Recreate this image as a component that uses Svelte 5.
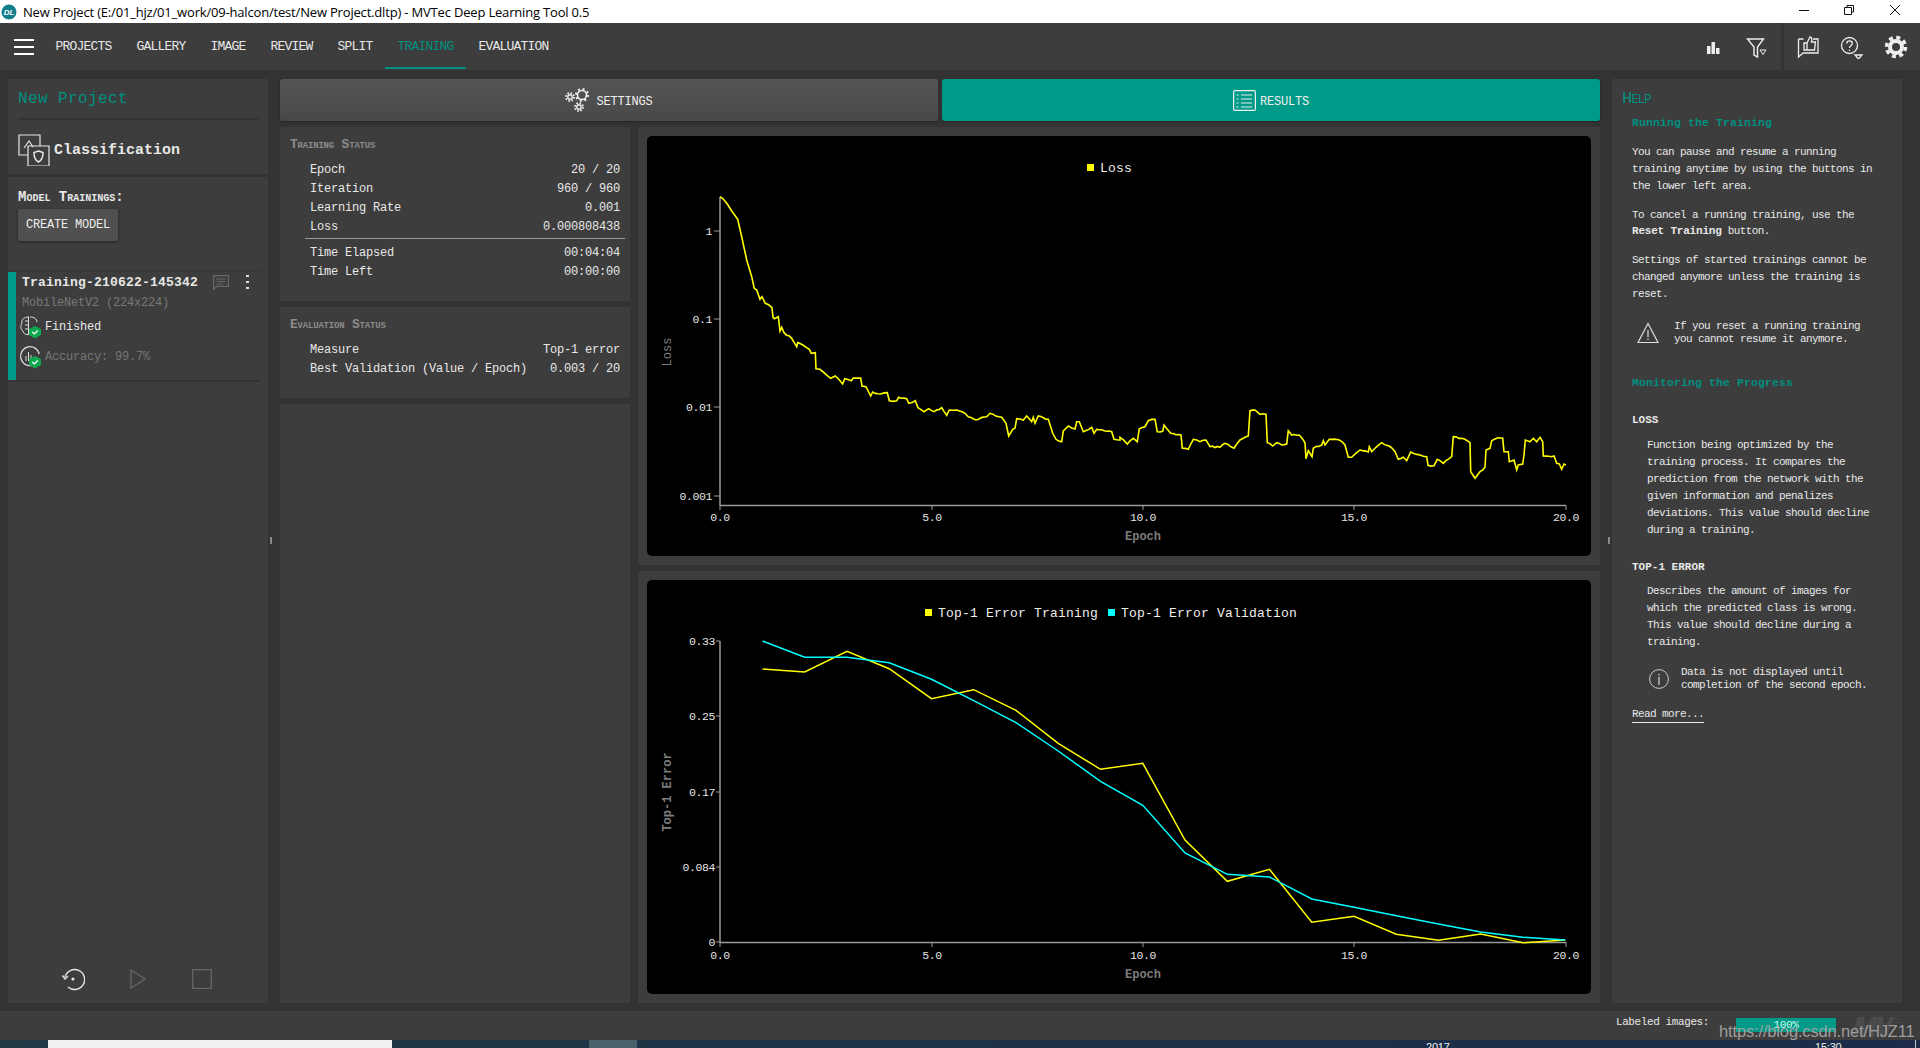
<script>
  const nav = ['PROJECTS', 'GALLERY', 'IMAGE', 'REVIEW', 'SPLIT', 'TRAINING', 'EVALUATION'];
  const trainRows = [['Epoch', '20 / 20'], ['Iteration', '960 / 960'], ['Learning Rate', '0.001'], ['Loss', '0.000808438']];
  const timeRows = [['Time Elapsed', '00:04:04'], ['Time Left', '00:00:00']];
  const evalRows = [['Measure', 'Top-1 error'], ['Best Validation (Value / Epoch)', '0.003 / 20']];

  const a1 = [240,200,250,207,262,222,275,243,293,268,305,320,320,390,335,440,343,475,350,480,360,508,366,500,376,520,396,533,399,562,403,566,415,560,420,603,425,592,432,608,455,625,470,650,473,638,490,646,508,658,514,670,526,668,528,716,540,718,552,728,572,745,586,738,608,762,614,746,634,752,640,744,662,744,666,768,678,770,692,798,698,786,722,792,742,788,748,812,770,812,776,802,800,806,806,820,826,812,834,833,852,845,866,836,882,845,905,833,920,856,928,840,950,840,975,850,985,860,1000,866,1008,870,1040,860,1050,850,1085,862,1098,880,1106,918,1118,898,1125,895,1130,866,1150,870,1160,858,1175,875,1180,862,1185,880,1195,858,1225,868,1238,910,1248,928,1265,935,1270,903,1285,888,1305,897,1310,875,1318,875,1330,905,1355,892,1362,910,1370,898,1415,905,1422,928,1440,930];
  const a2 = [60,412,82,432,100,415,112,425,118,386,135,380,145,362,165,358,172,395,188,394,192,375,212,400,243,405,247,445,265,448,280,418,300,425,318,420,330,440,360,442,375,430,402,445,420,420,445,408,450,332,465,330,480,343,498,343,502,428,518,438,530,428,545,435,560,432,565,392,575,405,598,405,615,428,618,476,625,452,636,470,640,445,665,435,670,422,675,435,688,418,718,420,735,435,745,472,755,472,770,458,780,450,805,456,808,440,815,455,828,442,845,428,868,438,885,455,895,478,910,472,920,482,932,456,960,465,980,470,984,496,1002,497,1012,478,1030,490,1055,470,1060,410,1085,415,1110,428,1112,515,1125,535,1140,515,1155,502,1158,450,1170,445,1175,422,1195,413,1208,415,1212,455,1225,455,1228,485,1242,480,1250,510,1255,495,1268,492,1272,465,1276,420,1290,425,1300,415,1310,425,1320,412,1328,425,1330,468,1362,468,1370,490,1378,492,1385,508,1392,492,1398,495];

  const raw = [];
  for (let i = 0; i < a1.length; i += 2) raw.push([640 + a1[i] / 3, 130 + a1[i + 1] / 3]);
  for (let i = 0; i < a2.length; i += 2) raw.push([1100 + a2[i] / 3, 300 + a2[i + 1] / 3]);

  function jitter(n) {
    const s = Math.sin(n * 12.9898) * 43758.5453;
    return (s - Math.floor(s) - 0.5) * 1.5;
  }
  function noisy(points) {
    const out = [];
    let c = 0;
    for (let i = 0; i < points.length - 1; i++) {
      const [x0, y0] = points[i];
      const [x1, y1] = points[i + 1];
      out.push([x0, y0]);
      const dx = x1 - x0;
      const n = x0 > 760 ? Math.floor(dx / 2.5) : 0;
      for (let k = 1; k < n; k++) {
        const t = k / n;
        out.push([x0 + dx * t, y0 + (y1 - y0) * t + jitter(c++)]);
      }
    }
    out.push(points[points.length - 1]);
    return out.map((p) => p[0].toFixed(1) + ',' + p[1].toFixed(1)).join(' ');
  }
  const lossLine = noisy(raw);

  const zy = [267,276,214,266,356,329,391,490,568,550,780,904,868,1027,1009,1063,1081,1062,1088,1080];
  const zc = [183,232,232,248,298,362,428,513,604,676,819,883,891,957,982,1007,1032,1056,1072,1080];
  const toLine = (arr) => arr.map((v, i) => (640 + (200 + 69 * i) / 1.633).toFixed(1) + ',' + (580 + v / 3).toFixed(1)).join(' ');
  const topY = toLine(zy);
  const topC = toLine(zc);

  const xTicks = [[720, '0.0'], [932, '5.0'], [1143, '10.0'], [1354, '15.0'], [1566, '20.0']];
  const yLoss = [[231, '1'], [319, '0.1'], [407, '0.01'], [496, '0.001']];
  const yErr = [[641, '0.33'], [716, '0.25'], [792, '0.17'], [867, '0.084'], [942, '0']];
</script>

<div class="app">
  <header class="title">
    <svg class="dl" viewBox="0 0 16 16" width="16" height="16">
      <circle cx="8" cy="8" r="7.5" fill="#12808c" />
      <text x="8" y="11" text-anchor="middle" class="dltext">DL</text>
    </svg>
    <span class="wintitle">New Project (E:/01_hjz/01_work/09-halcon/test/New Project.dltp) - MVTec Deep Learning Tool 0.5</span>
    <div class="winctl">
      <svg width="121" height="23" viewBox="1799 0 121 23" fill="none" stroke="#111" stroke-width="1">
        <path d="M1799 10.5h10" />
        <path d="M1844.5 7.5h7v7h-7z M1847 7V5.5h6.5v6.5H1852" />
        <path d="M1890 5l10 10M1900 5l-10 10" />
      </svg>
    </div>
  </header>

  <nav class="nav">
    <div class="burger"><i></i><i></i><i></i></div>
    <div class="navitems">
      {#each nav as n}
        <span class="navitem" class:active={n === 'TRAINING'}>{n}</span>
      {/each}
    </div>
    <div class="navright">
      <svg class="ic1" width="60" height="24" viewBox="1707 34 60 24" fill="none" stroke="#eee">
        <path d="M1707 45h3.5v8H1707zM1711.5 41h3.5v12h-3.5zM1716 47h3.5v6H1716z" fill="#eee" stroke="none" />
        <path d="M1747.5 38h16l-6 8v10l-3.5-2v-8z" stroke-width="1.4" />
        <path d="M1760 49h6l-3 4.5z" stroke-width="1" />
      </svg>
      <div class="navsep"></div>
      <svg class="ic2" width="112" height="24" viewBox="1796 34 112 24" fill="none" stroke="#eee" stroke-width="1.3">
        <path d="M1798.5 38h5M1813 38h5v14h-15l-4.500 4V38" />
        <path d="M1804 42h3v7h-3zM1807 42l3-6c2 0 2 2 1.500 5h4l-1 8h-7" />
        <circle cx="1849.500" cy="44.500" r="8" />
        <path d="M1846.800 42.500c0-3.500 5.500-3.500 5.500 0 0 2-2.800 2-2.800 4.500M1849.500 48.800v1.200" />
        <path d="M1855 54h7l-3.500 4z" />
        <circle cx="1896" cy="46" r="6" stroke-width="4" />
        <circle cx="1896" cy="46" r="9.500" stroke-width="3.500" stroke-dasharray="4 3.460" />
      </svg>
    </div>
  </nav>

  <main class="main">
    <aside class="left">
      <section class="panel p-project">
        <h1 class="project">New Project</h1>
        <div class="rule"></div>
        <div class="kind">
          <svg width="32" height="32" viewBox="0 0 32 32" fill="none" stroke="#e8e8e8" stroke-width="1.200">
            <path d="M1 1h21v20H1z M1 1h8" />
            <path d="M10 12h21v20H10z" fill="#3d3d3d" />
            <path d="M6 14l5-7 4 6" />
            <path d="M20.500 17l4.500 1.500c0 5-1.500 8-4.500 9.500-3-1.500-4.500-4.500-4.500-9.500z" stroke-width="1.500" />
          </svg>
          <span>Classification</span>
        </div>
      </section>
      <section class="panel p-train">
        <div class="mt">Model Trainings:</div>
        <button class="create">CREATE MODEL</button>
        <div class="thin"></div>
        <div class="item">
          <div class="tname">
            <b>Training-210622-145342</b>
            <svg width="16" height="15" viewBox="0 0 16 15" fill="none" stroke="#6a6a6a" stroke-width="1.200">
              <path d="M.6.600h14.800v10.800H4L.6 14.400zM3.500 4h9M3.500 6.500h9M3.500 9h6" />
            </svg>
            <span class="dots"><i></i><i></i><i></i></span>
          </div>
          <div class="arch">MobileNetV2 (224x224)</div>
          <div class="stat s1">
            <svg width="24" height="24" viewBox="0 0 24 24" fill="none" stroke="#ddd" stroke-width="1">
              <path d="M9.500 2C5 2 2 5 3 8c-2 3-1 7 1 8 0 2 2 4 5.500 3.500zM9.500 1.500v18M11 2c4 0 7 2 7 5M6 6h3M6 10h3M6 14h3" />
              <path d="M16 11l6 3v6l-6 3.500-6-3.500v-6z" fill="#10a84e" stroke="none" />
              <path d="M13.300 17l2 2 3.500-3.500" stroke="#fff" stroke-width="1.200" />
            </svg>
            <span>Finished</span>
          </div>
          <div class="stat s2">
            <svg width="24" height="24" viewBox="0 0 24 24" fill="none" stroke="#ddd" stroke-width="1">
              <path d="M13 20.500A9.500 9.500 0 1 1 20.300 9" stroke-width="1.300" />
              <path d="M7 11v5M9.500 7v9M12 10v6" />
              <path d="M16 11l6 3v6l-6 3.500-6-3.500v-6z" fill="#10a84e" stroke="none" />
              <path d="M13.300 17l2 2 3.500-3.500" stroke="#fff" stroke-width="1.200" />
            </svg>
            <span>Accuracy: 99.7%</span>
          </div>
        </div>
        <div class="thin2"></div>
        <div class="spring"></div>
        <div class="controls">
          <svg width="24" height="24" viewBox="0 0 24 24" fill="none" stroke="#e6e6e6" stroke-width="1.400">
            <path d="M4 10A10 10 0 1 1 7 20" />
            <path d="M1.500 8.500L4 12l3-3" />
            <circle cx="12" cy="12" r="1.600" fill="#e6e6e6" stroke="none" />
          </svg>
          <svg width="16" height="20" viewBox="0 0 16 20" fill="none" stroke="#666" stroke-width="1.300"><path d="M1 1l14 9-14 9z" /></svg>
          <svg width="20" height="20" viewBox="0 0 20 20" fill="none" stroke="#666" stroke-width="1.300"><path d="M.7.700h18.600v18.600H.7z" /></svg>
        </div>
      </section>
    </aside>
    <span class="grip g1"></span>

    <div class="center">
      <div class="tabs">
        <button class="tab">
          <svg width="26" height="26" viewBox="0 0 26 26" fill="none" stroke="#eee">
            <circle cx="17" cy="8" r="4.500" stroke-width="1.600" />
            <circle cx="17" cy="8" r="6" stroke-width="2" stroke-dasharray="2 2.700" />
            <circle cx="5" cy="10" r="2.200" stroke-width="1.400" />
            <circle cx="5" cy="10" r="4" stroke-width="1.800" stroke-dasharray="1.600 1.540" />
            <circle cx="14" cy="20" r="2.200" stroke-width="1.400" />
            <circle cx="14" cy="20" r="4" stroke-width="1.800" stroke-dasharray="1.600 1.540" />
          </svg>
          <span>SETTINGS</span>
        </button>
        <button class="tab on">
          <svg width="23" height="21" viewBox="0 0 23 21" fill="none" stroke="#eee" stroke-width="1.200">
            <rect x=".6" y=".6" width="21.800" height="19.800" rx="1.500" />
            <path d="M3.500 5h2M3.500 9h2M3.500 13h2M3.500 17h2M8 5h11M8 9h11M8 13h11M8 17h11" />
          </svg>
          <span>RESULTS</span>
        </button>
      </div>
      <div class="lower">
        <div class="status">
          <section class="panel st st1">
            <h2>Training Status</h2>
            {#each trainRows as r}
              <div class="row"><span>{r[0]}</span><span>{r[1]}</span></div>
            {/each}
            <div class="hr"></div>
            {#each timeRows as r}
              <div class="row"><span>{r[0]}</span><span>{r[1]}</span></div>
            {/each}
          </section>
          <section class="panel st st2">
            <h2>Evaluation Status</h2>
            {#each evalRows as r}
              <div class="row"><span>{r[0]}</span><span>{r[1]}</span></div>
            {/each}
          </section>
          <section class="panel st3"></section>
        </div>
        <div class="charts">
          <section class="panel cp c1">
            <div class="black">
              <svg viewBox="647 136 944 420" width="944" height="420">
                <rect x="1087" y="164" width="7" height="7" fill="#ff0" />
                <text x="1100" y="172" class="lg">Loss</text>
                <path d="M720 197V505.500M720 505.500H1566" class="axis" />
                {#each yLoss as t}
                  <path d="M714 {t[0]}h6" class="tick" />
                  <text x="712" y={t[0] + 4} text-anchor="end" class="tl">{t[1]}</text>
                {/each}
                {#each xTicks as t}
                  <path d="M{t[0]} 505v5" class="tick" />
                  <text x={t[0]} y="521" text-anchor="middle" class="tl">{t[1]}</text>
                {/each}
                <polyline points={lossLine} fill="none" stroke="#ff0" stroke-width="1.600" />
                <text transform="translate(671 352) rotate(-90)" text-anchor="middle" class="al">Loss</text>
                <text x="1143" y="540" text-anchor="middle" class="al b">Epoch</text>
              </svg>
            </div>
          </section>
          <section class="panel cp c2">
            <div class="black">
              <svg viewBox="647 580 944 414" width="944" height="414">
                <rect x="925" y="609" width="7" height="7" fill="#ff0" />
                <text x="938" y="617" class="lg">Top-1 Error Training</text>
                <rect x="1108" y="609" width="7" height="7" fill="#0ff" />
                <text x="1121" y="617" class="lg">Top-1 Error Validation</text>
                <path d="M720 641V942.500M720 942.500H1566" class="axis" />
                {#each yErr as t}
                  <path d="M716 {t[0]}h4" class="tick" />
                  <text x="715" y={t[0] + 4} text-anchor="end" class="tl">{t[1]}</text>
                {/each}
                {#each xTicks as t}
                  <path d="M{t[0]} 942v5" class="tick" />
                  <text x={t[0]} y="959" text-anchor="middle" class="tl">{t[1]}</text>
                {/each}
                <polyline points={topY} fill="none" stroke="#ff0" stroke-width="1.500" />
                <polyline points={topC} fill="none" stroke="#0ff" stroke-width="1.500" />
                <text transform="translate(671 792) rotate(-90)" text-anchor="middle" class="al b">Top-1 Error</text>
                <text x="1143" y="978" text-anchor="middle" class="al b">Epoch</text>
              </svg>
            </div>
          </section>
        </div>
      </div>
    </div>
    <span class="grip g2"></span>

    <aside class="panel help">
      <h3>Help</h3>
      <h4>Running the Training</h4>
      <p>You can pause and resume a running<br />training anytime by using the buttons in<br />the lower left area.</p>
      <p class="tight">To cancel a running training, use the<br /><b>Reset Training</b> button.</p>
      <p class="third">Settings of started trainings cannot be<br />changed anymore unless the training is<br />reset.</p>
      <div class="note warn">
        <svg width="22" height="22" viewBox="0 0 22 22" fill="none" stroke="#ddd" stroke-width="1.200">
          <path d="M11 1.500L21 20.500H1zM11 8v7M11 16.500v1.500" />
        </svg>
        <span>If you reset a running training<br />you cannot resume it anymore.</span>
      </div>
      <h4 class="mon">Monitoring the Progress</h4>
      <h5 class="l">LOSS</h5>
      <p class="ind">Function being optimized by the<br />training process. It compares the<br />prediction from the network with the<br />given information and penalizes<br />deviations. This value should decline<br />during a training.</p>
      <h5 class="t">TOP-1 ERROR</h5>
      <p class="ind ind2">Describes the amount of images for<br />which the predicted class is wrong.<br />This value should decline during a<br />training.</p>
      <div class="note info">
        <svg width="20" height="20" viewBox="0 0 20 20" fill="none" stroke="#ccc" stroke-width="1">
          <circle cx="10" cy="10" r="9.400" />
          <path d="M10 8v8M10 5v1.500" stroke-width="1.300" />
        </svg>
        <span>Data is not displayed until<br />completion of the second epoch.</span>
      </div>
      <a class="more" href="#more">Read more...</a>
    </aside>
  </main>

  <footer class="statusbar">
    <span class="lab">Labeled images:</span>
    <span class="bar">100%</span>
    <svg class="mv" width="54" height="22" viewBox="0 0 54 22" fill="#4c4c4c">
      <path d="M0 22L7 2h6l1 12L21 2h6l-4 20h-5l1-10-6 10H9l-1-11-4 11z" />
      <path d="M26 2h6l1 13 6-13h5l-9 20h-6z" />
      <text x="44" y="8" class="ec">EC</text>
    </svg>
  </footer>
  <span class="wm">https://blog.csdn.net/HJZ11</span>

  <div class="task">
    <i class="white"></i>
    <i class="sel"></i>
    <span class="d">2017</span>
    <span class="tm">15:30</span>
    <i class="edge"></i>
  </div>
</div>

<style>
  :global(body) { margin: 0; background: #333; }
  .app {
    position: relative;
    width: 1920px;
    height: 1048px;
    display: flex;
    flex-direction: column;
    overflow: hidden;
    font-family: "Liberation Mono", "DejaVu Sans Mono", monospace;
    font-size: 12px;
    letter-spacing: -0.2px;
    color: #e8e8e8;
    background: #333;
  }
  .title {
    height: 23px;
    background: #fff;
    display: flex;
    align-items: center;
    padding-left: 1px;
    color: #000;
    flex: none;
  }
  .dltext { font: italic bold 8px "Liberation Sans", sans-serif; fill: #fff; }
  .wintitle {
    font-family: "Open Sans", sans-serif;
    font-size: 13px;
    letter-spacing: -0.18px;
    margin-left: 6px;
  }
  .winctl { margin-left: auto; height: 23px; }
  .nav {
    height: 47px;
    flex: none;
    background: #3d3d3d;
    display: flex;
    align-items: stretch;
    padding-left: 14px;
  }
  .burger {
    width: 20px;
    display: flex;
    flex-direction: column;
    justify-content: center;
    gap: 5px;
  }
  .burger i { height: 2px; background: #fff; display: block; }
  .navitems { display: flex; margin-left: 9px; }
  .navitem {
    padding: 0 12.5px;
    font-size: 13px;
    letter-spacing: -0.8px;
    line-height: 48px;
    height: 44px;
  }
  .navitem.active { color: #00907f; border-bottom: 2px solid #00907f; }
  .navright { margin-left: auto; display: flex; align-items: center; position: relative; height: 47px; }
  .navsep { width: 3px; height: 47px; background: #333; margin-left: 14px; margin-right: 12px; }
  .ic2 { margin-right: 12px; }

  .main {
    flex: none;
    height: 941px;
    display: flex;
    padding: 9px 18px 8px 8px;
    box-sizing: border-box;
    position: relative;
  }
  .panel { background: #3d3d3d; }
  .left { width: 260px; display: flex; flex-direction: column; gap: 3px; flex: none; }
  .p-project { height: 95px; padding: 0 10px; box-sizing: border-box; }
  .project {
    margin: 0;
    padding-top: 10px;
    box-sizing: border-box;
    font-size: 16px;
    letter-spacing: 0.4px;
    font-weight: normal;
    line-height: 20px;
    height: 39px;
    color: #009080;
  }
  .rule { height: 2px; background: #333; }
  .kind { display: flex; align-items: center; margin-top: 14px; gap: 4px; font-size: 15px; letter-spacing: 0; font-weight: bold; }
  .p-train { flex: 1; display: flex; flex-direction: column; }
  .mt {
    margin: 12px 0 0 10px;
    font-variant: small-caps;
    font-weight: bold;
    font-size: 14px;
    letter-spacing: 0;
    line-height: 16px;
  }
  .create {
    margin: 4px 0 0 10px;
    width: 100px;
    height: 32px;
    background: #505050;
    border: 0;
    border-radius: 2px;
    box-shadow: 0 1px 3px rgba(0,0,0,.45);
    color: #eee;
    font: 12px "Liberation Mono", monospace;
    letter-spacing: -0.2px;
    padding: 0;
  }
  .thin { height: 2px; background: #383838; margin-top: 29px; width: 252px; }
  .item {
    height: 108px;
    border-left: 8px solid #009a88;
    box-sizing: border-box;
    padding-left: 6px;
    width: 252px;
  }
  .tname { display: flex; align-items: center; height: 20px; padding-bottom: 2px; }
  .tname b { font-size: 13px; letter-spacing: 0.2px; width: 191px; }
  .dots { display: flex; flex-direction: column; gap: 3.5px; margin-left: 17px; }
  .dots i { width: 2.500px; height: 2.500px; background: #ddd; display: block; }
  .arch { color: #787878; line-height: 18px; }
  .stat { display: flex; align-items: center; gap: 2px; margin-left: -3px; height: 24px; }
  .s1 { margin-top: 3px; }
  .s2 { margin-top: 6px; color: #757575; }
  .thin2 { height: 2px; background: #333; width: 252px; }
  .spring { flex: 1; }
  .controls { display: flex; align-items: center; height: 24px; margin: 0 0 12px 53px; gap: 0; }
  .controls svg:nth-child(2) { margin-left: 45px; }
  .controls svg:nth-child(3) { margin-left: 46px; }

  .grip { position: absolute; width: 2px; height: 7px; background: #888; top: 467px; }
  .g1 { left: 270px; }
  .g2 { left: 1608px; }

  .center { margin-left: 12px; width: 1320px; flex: none; display: flex; flex-direction: column; }
  .tabs { display: flex; gap: 4px; height: 42px; flex: none; }
  .tab {
    flex: 1;
    border: 0;
    border-radius: 3px;
    background: linear-gradient(#555, #484848);
    color: #eee;
    display: flex;
    align-items: center;
    justify-content: center;
    gap: 5px;
    font: 12px "Liberation Mono", monospace;
    letter-spacing: -0.2px;
    padding: 0;
    box-shadow: 0 1px 2px rgba(0,0,0,.3);
  }
  .tab span { padding-top: 4px; }
  .tab.on { background: #009a88; gap: 4px; }
  .lower { flex: 1; margin-top: 6px; display: flex; gap: 8px; min-height: 0; }
  .status { width: 350px; flex: none; display: flex; flex-direction: column; gap: 6px; }
  .st { box-sizing: border-box; padding: 0 10px 0 11px; }
  .st1 { height: 174px; }
  .st2 { height: 91px; }
  .st3 { flex: 1; }
  .st h2 {
    margin: 0 0 0 -1px;
    padding-top: 10px;
    font-size: 13px;
    font-variant: small-caps;
    letter-spacing: -0.2px;
    font-weight: bold;
    color: #8b8b8b;
    line-height: 16px;
    height: 34px;
    box-sizing: border-box;
  }
  .row {
    display: flex;
    justify-content: space-between;
    height: 19px;
    line-height: 19px;
    padding-left: 19px;
    white-space: pre;
  }
  .hr { height: 1px; background: #9a9a9a; margin: 1px -5px 5px 14px; }
  .charts { flex: 1; display: flex; flex-direction: column; gap: 6px; }
  .cp { padding: 9px; box-sizing: border-box; }
  .c1 { height: 438px; }
  .c2 { flex: 1; }
  .black { background: #000; border-radius: 5px; height: 100%; overflow: hidden; }
  .black svg { display: block; }
  .axis { fill: none; stroke: #9a9a9a; stroke-width: 1.500; }
  .tick { fill: none; stroke: #9a9a9a; stroke-width: 1; }
  .tl { font: 11.500px "Liberation Mono", monospace; letter-spacing: -0.4px; fill: #e4e4e4; }
  .lg { font: 13px "Liberation Mono", monospace; letter-spacing: 0.2px; fill: #eee; }
  .al { font: 12px "Liberation Mono", monospace; letter-spacing: 0; fill: #7d7d7d; }
  .al.b { font-weight: bold; }

  .help {
    margin-left: 12px;
    width: 290px;
    flex: none;
    box-sizing: border-box;
    padding: 10px 0 0 20px;
    font-size: 11px;
    letter-spacing: -0.6px;
    line-height: 17px;
  }
  .help h3 {
    margin: 0 0 0 -10px;
    font-variant: small-caps;
    font-size: 17px;
    letter-spacing: -0.8px;
    line-height: 20px;
    font-weight: normal;
    color: #009080;
  }
  .help h4 {
    margin: 5px 0 0;
    font-size: 11.500px;
    letter-spacing: 0.1px;
    line-height: 18px;
    font-weight: bold;
    color: #009080;
  }
  .help p { margin: 12px 0 0; }
  .help p.third { margin-top: 13px; }
  .help h4 + p { margin-top: 12px; }
  .help b { font-weight: bold; letter-spacing: -0.2px; }
  .help .tight { line-height: 16px; }
  .note { display: flex; line-height: 13px; align-items: center; }
  .warn { margin: 17px 0 0 5px; gap: 15px; }
  .help h4.mon { margin-top: 28px; }
  .help h5 {
    margin: 0;
    font-size: 11px;
    letter-spacing: 0;
    line-height: 16px;
    font-weight: bold;
  }
  .help h5.l { margin-top: 20px; }
  .help h5.t { margin-top: 20px; }
  .help .ind { margin: 9px 0 0 15px; }
  .help .ind2 { margin-top: 8px; }
  .info { margin: 15px 0 0 17px; gap: 12px; }
  .more {
    display: inline-block;
    margin-top: 15px;
    color: #e8e8e8;
    text-decoration: none;
    border-bottom: 1px solid #e8e8e8;
    line-height: 15px;
  }

  .statusbar {
    height: 29px;
    flex: none;
    background: #3d3d3d;
    display: flex;
    align-items: center;
    font-size: 11px;
    letter-spacing: -0.4px;
    padding-right: 15px;
    justify-content: flex-end;
    box-sizing: border-box;
  }
  .lab { margin-top: -7px; }
  .bar {
    margin: -2px 0 0 27px;
    width: 100px;
    height: 14px;
    line-height: 14px;
    background: #009a88;
    color: #cfe;
    text-align: center;
    font-size: 11px;
  }
  .mv { margin-left: 15px; }
  .ec { font: 6px "Liberation Sans", sans-serif; fill: #4c4c4c; }
  .wm {
    position: absolute;
    left: 1719px;
    top: 1019px;
    font: 16.500px "Liberation Sans", sans-serif;
    letter-spacing: -0.15px;
    color: #a6a6a6;
    opacity: .92;
    line-height: 24px;
  }
  .task {
    height: 8px;
    flex: none;
    position: relative;
    overflow: hidden;
    background: linear-gradient(90deg, #1f3a45, #1b2b48);
    font: 11px "Liberation Sans", sans-serif;
    color: #eee;
  }
  .task i, .task span { position: absolute; display: block; }
  .white { left: 48px; width: 344px; top: 0; height: 8px; background: #f0f0f0; }
  .sel { left: 589px; width: 48px; top: 0; height: 8px; background: #4a626b; }
  .d { left: 1426px; top: 1px; }
  .tm { left: 1815px; top: 1px; }
  .edge { left: 1915px; width: 1px; top: 0; height: 8px; background: #bcc; }
</style>
